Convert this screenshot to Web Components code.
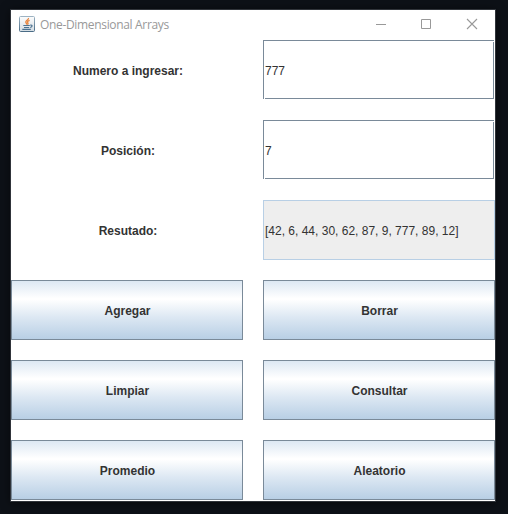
<!DOCTYPE html>
<html lang="es">
<head>
<meta charset="utf-8">
<title>One-Dimensional Arrays</title>
<style>
html,body{margin:0;height:100%}
body{background:#0d1117;overflow:hidden}
</style>
</head>
<body>
<array-window caption="One-Dimensional Arrays">
  <form-label>Numero a ingresar:</form-label><text-box>777</text-box>
  <form-label>Posición:</form-label><text-box>7</text-box>
  <form-label>Resutado:</form-label><text-box readonly>[42, 6, 44, 30, 62, 87, 9, 777, 89, 12]</text-box>
  <metal-button>Agregar</metal-button><metal-button>Borrar</metal-button>
  <metal-button>Limpiar</metal-button><metal-button>Consultar</metal-button>
  <metal-button>Promedio</metal-button><metal-button>Aleatorio</metal-button>
</array-window>
<script>
function define(name, html, setup) {
  customElements.define(name, class extends HTMLElement {
    constructor() {
      super();
      this.attachShadow({ mode: 'open' }).innerHTML = html;
    }
    connectedCallback() { if (setup) setup(this); }
  });
}

define('java-icon', `
<style>:host{display:block;width:16px;height:16px}svg{display:block}</style>
<svg width="16" height="16" viewBox="0 0 16 16" fill="none">
  <defs><linearGradient id="g" x2="0" y2="1"><stop stop-color="#fdfdfd"/><stop offset="1" stop-color="#d3dce3"/></linearGradient>
  <linearGradient id="b" x2="0" y2="1"><stop stop-color="#9db3c3"/><stop offset="1" stop-color="#4a6c86"/></linearGradient></defs>
  <rect x=".5" y=".5" width="15" height="15" rx="1" fill="url(#g)" stroke="url(#b)"/>
  <path d="M9.500 2C9.900 4 6.500 4.600 6.800 6.200C7 7.200 8 7.600 8 8.700M10.600 4.300C8.500 5 8 5.900 8.900 6.900C9.300 7.400 9 8 8.600 8.500" stroke="#e8833a" stroke-width="1.300"/>
  <path d="M4.300 9.500H10.800M5 11.500H10.200M3.300 13.400H11.800M11.300 9.200C13.800 8.800 13.500 11 11.200 11.500" stroke="#4b7190" stroke-width="1.200"/>
</svg>`);

define('caption-buttons', `
<style>:host{display:flex;color:#999}svg{display:block;width:46px;height:30px}svg+svg{width:45px}svg+svg+svg{width:46px}</style>
<svg viewBox="0 0 46 30"><path d="M18 14.500h10" stroke="currentColor"/></svg>
<svg viewBox="0 0 45 30"><path d="M17.500 9.500h9v9h-9z" fill="none" stroke="currentColor"/></svg>
<svg viewBox="0 0 46 30"><path d="M18 9l10 10M28 9l-10 10" stroke="currentColor" stroke-width="1.100"/></svg>`);

define('title-bar', `
<style>
:host{display:flex;align-items:center;height:30px;padding-left:8px;box-sizing:border-box;font:12px/16px "Open Sans","Noto Sans",sans-serif;color:#999}
span{margin-left:5px;white-space:nowrap;letter-spacing:-.33px}
java-icon{margin-bottom:2px}
caption-buttons{margin-left:auto}
</style>
<java-icon></java-icon><span><slot></slot></span><caption-buttons></caption-buttons>`);

define('form-label', `
<style>:host{display:flex;align-items:center;justify-content:center;padding:2px 0 0 2px;font-weight:700}</style>
<slot></slot>`);

define('text-box', `
<style>
:host{display:flex;align-items:center;box-sizing:border-box;padding:2px 2px 0;white-space:nowrap;
  /* flush 3D edge: dark sides stop short of two opposite corners */
  background:
    linear-gradient(#7a8a99,#7a8a99) 0 0/231px 1px,
    linear-gradient(#7a8a99,#7a8a99) 0 0/1px 59px,
    linear-gradient(#7a8a99,#7a8a99) 2px 58px/229px 1px,
    linear-gradient(#7a8a99,#7a8a99) 230px 2px/1px 57px,#fff;
  background-repeat:no-repeat}
:host([readonly]){background:#eee;border:1px solid #b8cfe5;padding:2px 1px 0}
</style>
<slot></slot>`);

define('metal-button', `
<style>
:host{display:flex;align-items:center;justify-content:center;box-sizing:border-box;border:1px solid #7a8a99;padding:2px 0 0 1px;font-weight:700;
background:linear-gradient(#dde8f3 0,#fff 30%,#fff 32%,#dde8f3 62%,#b8cfe5 100%)}
</style>
<slot></slot>`);

define('array-window', `
<style>
:host{display:block;box-sizing:border-box;width:508px;height:514px;padding:9px 12px 12px 10px}
.frame{display:flex;flex-direction:column;box-sizing:border-box;width:486px;height:493px;border:1px solid #30343a;background:#fff;box-shadow:0 1px 9px #0008}
.grid{display:grid;grid-template-columns:232px 232px;grid-auto-rows:60px;gap:20px;font:12px/14px "Liberation Sans",Arial,sans-serif;color:#333}
</style>
<div class="frame"><title-bar></title-bar><div class="grid"><slot></slot></div></div>`,
el => { el.shadowRoot.querySelector('title-bar').textContent = el.getAttribute('caption'); });
</script>
</body>
</html>
